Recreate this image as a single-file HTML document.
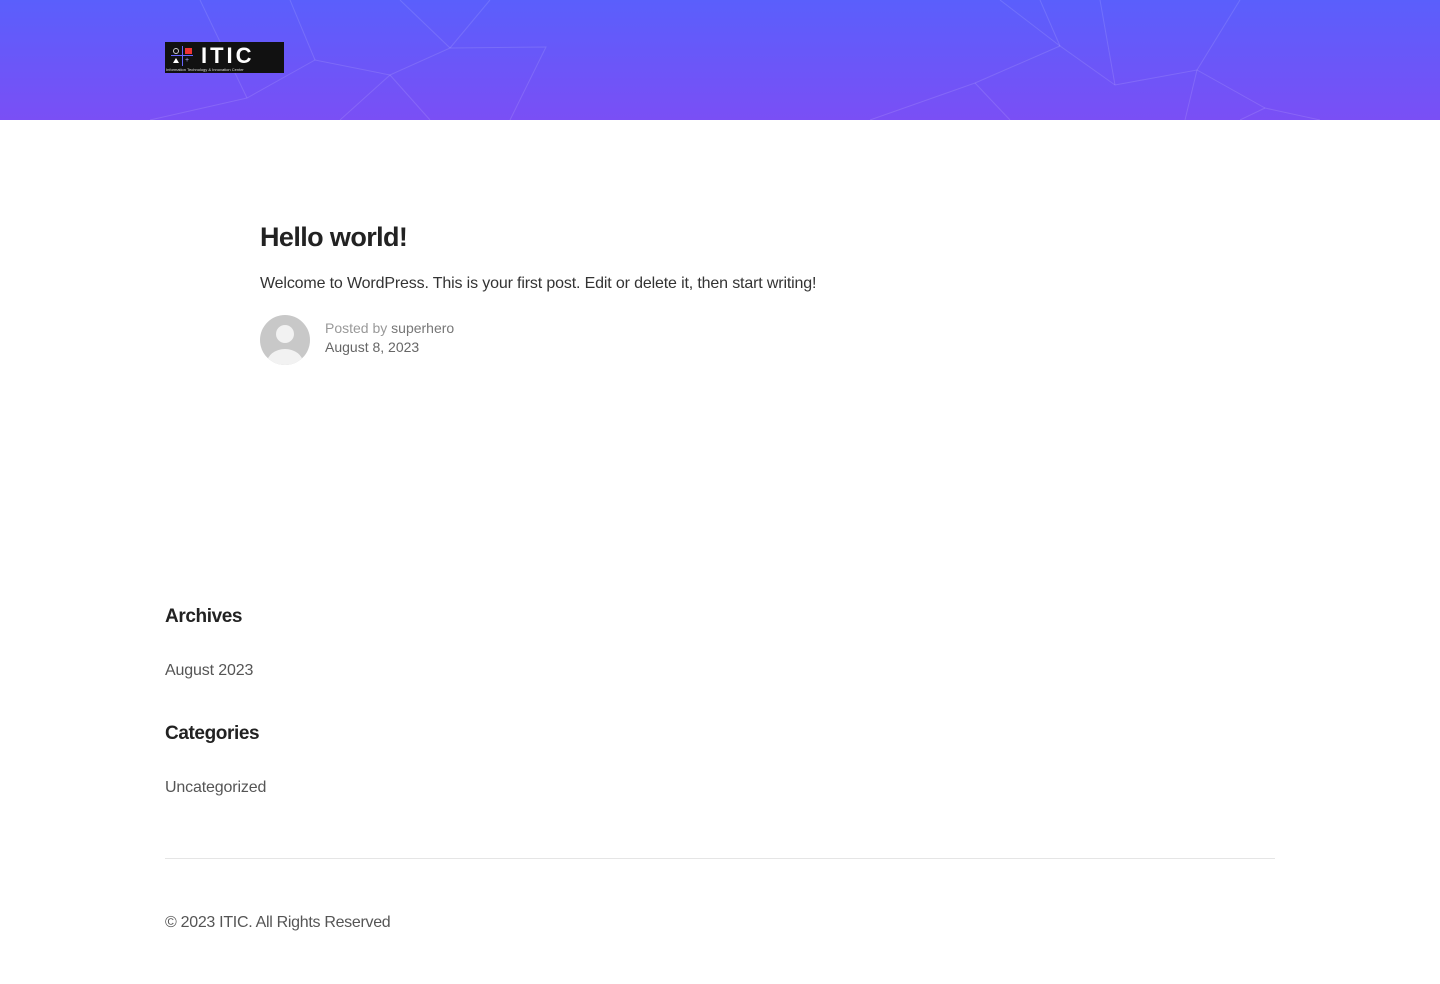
<!DOCTYPE html>
<html><head><meta charset="utf-8"><style>
body{margin:0;width:1440px;height:984px;background:#fff;font-family:"Liberation Sans",sans-serif;color:#333;position:relative;overflow:hidden}
.hdr{position:absolute;left:0;top:0;width:1440px;height:120px;background:linear-gradient(180deg,#5a5ffc 0%,#7a4ff5 100%);overflow:hidden}
.logo{position:absolute;left:165px;top:42px;width:119px;height:31px;background:#111}
.t{position:absolute;font-size:16px;color:#333;letter-spacing:-0.15px}
h1,h3{margin:0;position:absolute;font-weight:bold;color:#222}
</style></head><body>
<div class="hdr">
<svg width="1440" height="120" style="position:absolute;left:0;top:0" stroke="rgba(255,255,255,0.12)" fill="none" stroke-width="1">
<polyline points="150,120 247,98 315,60 390,75 450,48 546,47 510,120"/>
<polyline points="247,98 200,0"/><polyline points="315,60 290,0"/><polyline points="390,75 340,120"/><polyline points="390,75 430,120"/>
<polyline points="450,48 490,0"/><polyline points="450,48 400,0"/>
<polyline points="870,120 975,83 1060,46 1115,85 1197,70 1265,108 1320,120"/>
<polyline points="975,83 1010,120"/><polyline points="1060,46 1040,0"/><polyline points="1115,85 1100,0"/><polyline points="1197,70 1185,120"/><polyline points="1197,70 1240,0"/><polyline points="1265,108 1240,120"/>
<polyline points="1060,46 1000,0"/>
</svg>
<div class="logo">
<div style="position:absolute;left:8px;top:6px;width:6px;height:6px;border:1px solid #ccc;border-radius:50%;box-sizing:border-box"></div>
<div style="position:absolute;left:20px;top:6px;width:7px;height:6px;background:#e33"></div>
<div style="position:absolute;left:6px;top:13px;width:22px;height:1px;background:#66f"></div>
<div style="position:absolute;left:17px;top:4px;width:1px;height:20px;background:#66f"></div>
<div style="position:absolute;left:8px;top:16px;width:0;height:0;border-left:3px solid transparent;border-right:3px solid transparent;border-bottom:5px solid #fff"></div>
<div style="position:absolute;left:20px;top:15px;color:#aaf;font-size:7px;line-height:7px">+</div>
<div style="position:absolute;left:36px;top:0;color:#fff;font-size:22px;font-weight:bold;letter-spacing:3px;line-height:28px">ITIC</div>
<div style="position:absolute;left:1px;top:25px;color:#ddd;font-size:4px;white-space:nowrap">Information Technology &amp; Innovation Center</div>
</div>
</div>
<h1 style="left:260px;top:222px;font-size:27px;letter-spacing:-0.6px">Hello world!</h1>
<div class="t" style="left:260px;top:275px">Welcome to WordPress. This is your first post. Edit or delete it, then start writing!</div>
<svg style="position:absolute;left:260px;top:315px" width="50" height="50"><defs><clipPath id="c"><circle cx="25" cy="25" r="25"/></clipPath></defs><circle cx="25" cy="25" r="25" fill="#c8c8c8"/><g clip-path="url(#c)" fill="#f2f2f2"><circle cx="25" cy="19" r="9"/><ellipse cx="25" cy="48" rx="18" ry="14"/></g></svg>
<div class="t" style="left:325px;top:320px;font-size:14px;color:#999;letter-spacing:0">Posted by <span style="color:#777">superhero</span></div>
<div class="t" style="left:325px;top:339px;font-size:14px;color:#666;letter-spacing:0">August 8, 2023</div>
<h3 style="left:165px;top:606px;font-size:19px;letter-spacing:-0.4px">Archives</h3>
<div class="t" style="left:165px;top:662px;color:#555">August 2023</div>
<h3 style="left:165px;top:723px;font-size:19px;letter-spacing:-0.4px">Categories</h3>
<div class="t" style="left:165px;top:779px;color:#555">Uncategorized</div>
<div style="position:absolute;left:165px;top:858px;width:1110px;height:1px;background:#e5e5e5"></div>
<div class="t" style="left:165px;top:914px;color:#555;letter-spacing:-0.3px">© 2023 ITIC. All Rights Reserved</div>
</body></html>
